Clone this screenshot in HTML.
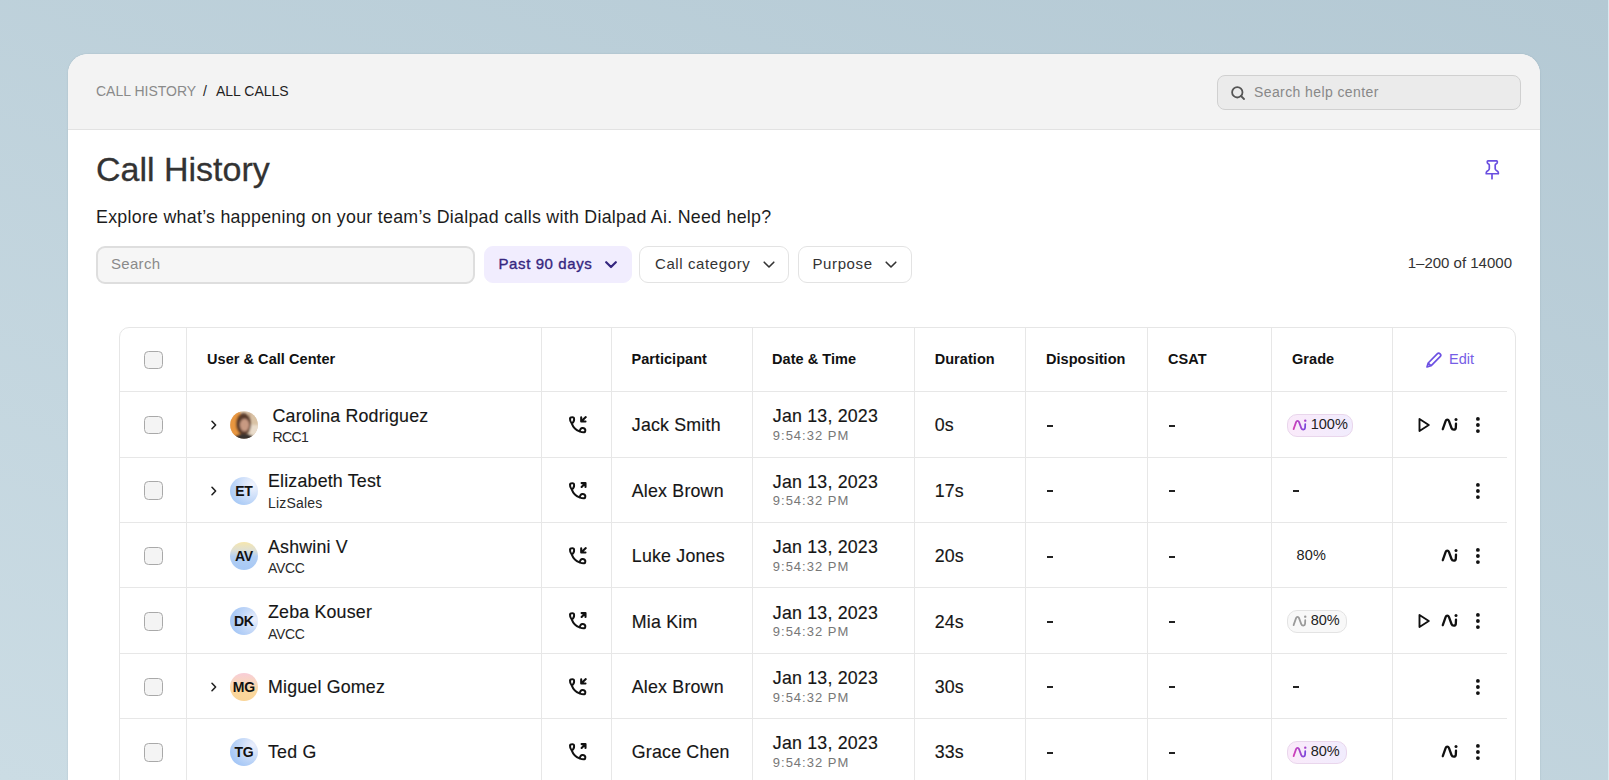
<!DOCTYPE html>
<html><head><meta charset="utf-8">
<style>
*{box-sizing:border-box;margin:0;padding:0}
html,body{width:1609px;height:780px;overflow:hidden}
body{font-family:"Liberation Sans",sans-serif;background:linear-gradient(200deg,#b4c9d4 0%,#cbdce4 100%);position:relative;color:#1c1c1c}
.abs{position:absolute}
#card{position:absolute;left:68px;top:54px;width:1472px;height:760px;background:#fff;border-radius:20px 20px 0 0;overflow:hidden;box-shadow:0 0 1.5px rgba(60,80,90,0.25)}
#topbar{position:absolute;left:0;top:0;width:100%;height:76px;background:#f3f3f3;border-bottom:1px solid #e2e2e2}
.crumb{position:absolute;top:29px;font-size:14px;letter-spacing:0px;white-space:nowrap}
#help{position:absolute;left:1149px;top:21px;width:304px;height:35px;background:#ebebeb;border:1.5px solid #d0d0d0;border-radius:8px}
#help span{position:absolute;left:36px;top:8px;font-size:14px;letter-spacing:0.4px;color:#888;white-space:nowrap}
h1{position:absolute;left:28px;top:96px;font-size:34px;font-weight:400;color:#333;white-space:nowrap;-webkit-text-stroke:0.3px #333}
.desc{position:absolute;left:28px;top:152.8px;font-size:17.8px;letter-spacing:0.28px;color:#1c1c1c;white-space:nowrap}
.inp{position:absolute;left:28px;top:192px;width:379px;height:38px;background:#f6f6f6;border:2px solid #dedede;border-radius:9px}
.inp span{position:absolute;left:13px;top:7px;font-size:15px;letter-spacing:0.3px;color:#8a8a8a}
.btn{position:absolute;top:192px;height:37px;border-radius:9px;border:1.5px solid #e3e3e3;background:#fff;font-size:15px;color:#333;white-space:nowrap}
.btn span{position:absolute;top:8px;letter-spacing:0.6px}
.btn svg{position:absolute;top:14px}
.count{position:absolute;right:28px;top:200px;font-size:15px;color:#333;white-space:nowrap}
#table{position:absolute;left:51px;top:273px;width:1397px;height:500px;border:1px solid #e6e6e6;border-radius:10px;overflow:hidden}
.vl{position:absolute;top:0;width:1px;height:500px;background:#e7e7e7}
.hl{position:absolute;left:0;width:1387px;height:1px;background:#e7e7e7}
.th{position:absolute;top:24px;font-size:14.5px;font-weight:700;color:#111;white-space:nowrap;letter-spacing:0.05px}
.cb{position:absolute;width:18.5px;height:18.5px;border:1.7px solid #a9a9a9;border-radius:4.5px;background:#f4f4f4}
.t17{position:absolute;font-size:17.8px;letter-spacing:0.2px;color:#161616;white-space:nowrap;-webkit-text-stroke:0.15px #161616}
.t14{position:absolute;font-size:14px;letter-spacing:0.2px;color:#2a2a2a;white-space:nowrap}
.tm{position:absolute;font-size:13px;letter-spacing:1px;color:#777;white-space:nowrap}
.av{position:absolute;left:109px;width:28px;height:28px;border-radius:50%;font-size:14px;font-weight:700;color:#111;text-align:center;line-height:28px;letter-spacing:-0.3px}
.chev{position:absolute;left:90px}
.pill{position:absolute;height:23px;border-radius:10px;border:1.5px solid #e3d3ee;background:#f8eafb}
.pill span{position:absolute;top:1px;font-size:14.5px;color:#222;white-space:nowrap}
</style></head><body>
<div style="position:absolute;left:1608px;top:0;width:1px;height:780px;background:#dbe9ef"></div>
<div id="card">
  <div id="topbar">
    <div class="crumb" style="left:28px;color:#8a8a8a">CALL HISTORY</div>
    <div class="crumb" style="left:135px;color:#222">/</div>
    <div class="crumb" style="left:148px;color:#1f1f1f">ALL CALLS</div>
    <div id="help">
      <svg style="position:absolute;left:13px;top:10px" width="15" height="14" viewBox="0 0 15 14"><circle cx="6.3" cy="6.3" r="5.2" fill="none" stroke="#555" stroke-width="1.8"/><path d="M10 10 L13 13" stroke="#555" stroke-width="1.8" stroke-linecap="round"/></svg>
      <span>Search help center</span>
    </div>
  </div>
  <h1>Call History</h1>
  <svg class="abs" style="left:1416px;top:104px" width="17" height="23" viewBox="0 0 17 23"><path d="M4 2.85 H12.6 Q13.3 2.85 13.3 3.6 V4.6 Q13.3 5.6 12.2 5.8 Q11.2 6 11.2 7 V10.8 Q11.2 11.8 12.4 12.4 Q14.35 13.3 14.35 14.8 V15.75 H2.25 V14.8 Q2.25 13.3 4.2 12.4 Q5.3 11.8 5.3 10.8 V7 Q5.3 6 4.3 5.8 Q3.3 5.6 3.3 4.6 V3.6 Q3.3 2.85 4 2.85 Z" fill="none" stroke="#6a4fe0" stroke-width="1.7" stroke-linejoin="round"/><path d="M8 15.75 V20.7" stroke="#6a4fe0" stroke-width="1.7" stroke-linecap="round"/></svg>
  <div class="desc">Explore what’s happening on your team’s Dialpad calls with Dialpad Ai. Need help?</div>
  <div class="inp"><span>Search</span></div>
  <div class="btn" style="left:416px;width:148px;background:#f1edfe;border-color:#f1edfe;color:#35277f;-webkit-text-stroke:0.35px #35277f"><span style="left:13.5px">Past 90 days</span>
    <svg style="left:120px" width="12" height="8" viewBox="0 0 12 8"><path d="M1.2 1.2 L6 6 L10.8 1.2" fill="none" stroke="#35277f" stroke-width="2.2" stroke-linecap="round" stroke-linejoin="round"/></svg></div>
  <div class="btn" style="left:571px;width:150px"><span style="left:15px">Call category</span>
    <svg style="left:123px" width="12" height="8" viewBox="0 0 12 8"><path d="M1.2 1.2 L6 6 L10.8 1.2" fill="none" stroke="#333" stroke-width="1.6" stroke-linecap="round" stroke-linejoin="round"/></svg></div>
  <div class="btn" style="left:730px;width:114px"><span style="left:13.5px">Purpose</span>
    <svg style="left:86px" width="12" height="8" viewBox="0 0 12 8"><path d="M1.2 1.2 L6 6 L10.8 1.2" fill="none" stroke="#333" stroke-width="1.6" stroke-linecap="round" stroke-linejoin="round"/></svg></div>
  <div class="count">1–200 of 14000</div>

  <div id="table">
<div class="vl" style="left:66px"></div>
<div class="vl" style="left:421px"></div>
<div class="vl" style="left:491px"></div>
<div class="vl" style="left:632px"></div>
<div class="vl" style="left:794px"></div>
<div class="vl" style="left:905px"></div>
<div class="vl" style="left:1027px"></div>
<div class="vl" style="left:1151px"></div>
<div class="vl" style="left:1272px"></div>
<div class="hl" style="top:63.0px"></div>
<div class="hl" style="top:128.5px"></div>
<div class="hl" style="top:194.0px"></div>
<div class="hl" style="top:259.3px"></div>
<div class="hl" style="top:324.6px"></div>
<div class="hl" style="top:390.2px"></div>
<div class="cb" style="left:24.2px;top:22.6px"></div>
<div class="th" style="left:87.0px;top:22.9px;">User &amp; Call Center</div>
<div class="th" style="left:511.5px;top:22.9px;">Participant</div>
<div class="th" style="left:652.0px;top:22.9px;">Date &amp; Time</div>
<div class="th" style="left:814.7px;top:22.9px;">Duration</div>
<div class="th" style="left:926.0px;top:22.9px;">Disposition</div>
<div class="th" style="left:1048.0px;top:22.9px;">CSAT</div>
<div class="th" style="left:1172.0px;top:22.9px;">Grade</div>
<svg class="abs" style="left:1305.0px;top:24.0px" width="17" height="17" viewBox="0 0 17 17"><path d="M12.2 1.8 C13 1 14.3 1 15.1 1.8 C15.9 2.6 15.9 3.9 15.1 4.7 L6 13.8 L2 15 L3.2 11 Z M3.2 11 L6 13.8" fill="none" stroke="#6d51e3" stroke-width="1.7" stroke-linejoin="round"/></svg>
<div class="th" style="left:1329.0px;top:22.9px;font-weight:400;color:#765de6">Edit</div>
<div class="cb" style="left:24.2px;top:87.9px"></div>
<svg class="abs" style="left:89.5px;top:92.0px" width="8" height="10" viewBox="0 0 8 10"><path d="M2 1.3 L5.6 5 L2 8.7" fill="none" stroke="#222" stroke-width="1.6" stroke-linecap="round" stroke-linejoin="round"/></svg>
<svg class="abs" style="left:109.6px;top:83.0px" width="28" height="28" viewBox="0 0 28 28"><defs><clipPath id="avc"><circle cx="14" cy="14" r="13.8"/></clipPath><filter id="avb" x="-20%" y="-20%" width="140%" height="140%"><feGaussianBlur stdDeviation="0.9"/></filter></defs><g clip-path="url(#avc)"><rect x="0" y="0" width="28" height="28" fill="#dcc6ad"/><g filter="url(#avb)"><rect x="-2" y="-2" width="12" height="30" fill="#e8963f"/><rect x="18" y="2" width="3" height="20" fill="#c8a98b"/><rect x="22" y="-2" width="8" height="16" fill="#d9c2a4"/><rect x="20" y="14" width="10" height="10" fill="#e9dccb"/><ellipse cx="13.5" cy="13" rx="7.5" ry="11" fill="#5a3b2a"/><ellipse cx="14.6" cy="14" rx="4.6" ry="6.3" fill="#c89a82"/><ellipse cx="14" cy="28" rx="11" ry="5" fill="#37312d"/></g></g></svg>
<div class="t17" style="left:152.5px;top:77.9px;">Carolina Rodriguez</div>
<div class="t14" style="left:152.5px;top:101.3px;letter-spacing:-0.6px">RCC1</div>
<svg class="abs" style="left:448.0px;top:87.0px" width="20" height="20" viewBox="0 0 20 20"><path d="M3.7 8.3 C5 11.8 8 15 11.5 16.4 C13.5 17.2 15.5 17.6 16.9 17.1 C17.4 16 17.2 14.2 16.5 13.6 C15.5 12.8 13.5 12.9 12.7 13.9 C12.2 14.6 12 15.5 11.5 16.4 M3.7 8.3 C2.4 6.8 1.9 4.8 2 3.5 C2.1 2.5 3 2.2 4.3 2.2 C5.6 2.2 6.2 2.8 6.1 4.2 C6.1 5.8 5.3 7.5 3.7 8.3" fill="none" stroke="#111" stroke-width="2" stroke-linecap="round" stroke-linejoin="round"/><path d="M13.2 2.4 V6.5 H17.5 M13.4 6.3 L17.8 2.1" fill="none" stroke="#111" stroke-width="2.1" stroke-linecap="round" stroke-linejoin="round"/></svg>
<div class="t17" style="left:511.8px;top:87.2px;">Jack Smith</div>
<div class="t17" style="left:652.8px;top:78.2px;">Jan 13, 2023</div>
<div class="tm" style="left:652.8px;top:99.9px;">9:54:32 PM</div>
<div class="t17" style="left:814.7px;top:87.2px;">0s</div>
<div class="abs" style="left:926.8px;top:96.8px;width:6px;height:2px;background:#222"></div>
<div class="abs" style="left:1048.8px;top:96.8px;width:6px;height:2px;background:#222"></div>
<div class="pill" style="left:1167.2px;top:85.6px;width:66px;background:linear-gradient(90deg,#faeafa,#f1ecfd);border-color:#e9d6ec"><svg class="abs" style="left:4px;top:3px" width="15" height="14" viewBox="0 0 17 15"><defs><linearGradient id="g0" x1="0" y1="0" x2="1" y2="0"><stop offset="0" stop-color="#d13fb8"/><stop offset="1" stop-color="#7a48dc"/></linearGradient></defs><path d="M1.8 12.2 L4.6 4.2 C5.3 2.2 7.3 2.2 8 4.2 L10.5 11 C11.3 13.2 14.6 13.2 14.8 10.8 L15 6.6" fill="none" stroke="url(#g0)" stroke-width="2.0" stroke-linecap="round" stroke-linejoin="round"/><circle cx="15" cy="2.6" r="1.35" fill="url(#g0)"/></svg><span style="left:22.5px">100%</span></div>
<svg class="abs" style="left:1297.0px;top:89.0px" width="14" height="16" viewBox="0 0 14 16"><path d="M2.5 2 L11.8 8 L2.5 14 Z" fill="none" stroke="#111" stroke-width="1.9" stroke-linejoin="round"/></svg>
<svg class="abs" style="left:1321.0px;top:88.8px" width="17" height="15" viewBox="0 0 17 15"><path d="M1.8 12.2 L4.6 4.2 C5.3 2.2 7.3 2.2 8 4.2 L10.5 11 C11.3 13.2 14.6 13.2 14.8 10.8 L15 6.6" fill="none" stroke="#111" stroke-width="2.3" stroke-linecap="round" stroke-linejoin="round"/><circle cx="15" cy="2.6" r="1.5" fill="#111"/></svg>
<svg class="abs" style="left:1354.0px;top:88.0px" width="8" height="18" viewBox="0 0 8 18"><circle cx="3.9" cy="2.9" r="1.9" fill="#111"/><circle cx="3.9" cy="9" r="1.9" fill="#111"/><circle cx="3.9" cy="15.1" r="1.9" fill="#111"/></svg>
<div class="cb" style="left:24.2px;top:153.4px"></div>
<svg class="abs" style="left:89.5px;top:157.5px" width="8" height="10" viewBox="0 0 8 10"><path d="M2 1.3 L5.6 5 L2 8.7" fill="none" stroke="#222" stroke-width="1.6" stroke-linecap="round" stroke-linejoin="round"/></svg>
<div class="av" style="left:109.8px;top:148.5px;background:radial-gradient(circle at 80% 28%,#f3f5fd 0%,#d3e2fa 35%,#acccf6 75%,#a6c8f6 100%)">ET</div>
<div class="t17" style="left:148.0px;top:143.4px;">Elizabeth Test</div>
<div class="t14" style="left:148.0px;top:166.8px;">LizSales</div>
<svg class="abs" style="left:448.0px;top:152.5px" width="20" height="20" viewBox="0 0 20 20"><path d="M3.7 8.3 C5 11.8 8 15 11.5 16.4 C13.5 17.2 15.5 17.6 16.9 17.1 C17.4 16 17.2 14.2 16.5 13.6 C15.5 12.8 13.5 12.9 12.7 13.9 C12.2 14.6 12 15.5 11.5 16.4 M3.7 8.3 C2.4 6.8 1.9 4.8 2 3.5 C2.1 2.5 3 2.2 4.3 2.2 C5.6 2.2 6.2 2.8 6.1 4.2 C6.1 5.8 5.3 7.5 3.7 8.3" fill="none" stroke="#111" stroke-width="2" stroke-linecap="round" stroke-linejoin="round"/><path d="M13.6 2.1 H17.5 V6 M17.3 2.3 L13.6 6" fill="none" stroke="#111" stroke-width="2.1" stroke-linecap="round" stroke-linejoin="round"/></svg>
<div class="t17" style="left:511.8px;top:152.7px;">Alex Brown</div>
<div class="t17" style="left:652.8px;top:143.7px;">Jan 13, 2023</div>
<div class="tm" style="left:652.8px;top:165.4px;">9:54:32 PM</div>
<div class="t17" style="left:814.7px;top:152.7px;">17s</div>
<div class="abs" style="left:926.8px;top:162.3px;width:6px;height:2px;background:#222"></div>
<div class="abs" style="left:1048.8px;top:162.3px;width:6px;height:2px;background:#222"></div>
<div class="abs" style="left:1172.5px;top:162.3px;width:6px;height:2px;background:#222"></div>
<svg class="abs" style="left:1354.0px;top:153.5px" width="8" height="18" viewBox="0 0 8 18"><circle cx="3.9" cy="2.9" r="1.9" fill="#111"/><circle cx="3.9" cy="9" r="1.9" fill="#111"/><circle cx="3.9" cy="15.1" r="1.9" fill="#111"/></svg>
<div class="cb" style="left:24.2px;top:218.9px"></div>
<div class="av" style="left:109.8px;top:214.0px;background:linear-gradient(180deg,#f6e6ad 0%,#e0e0d2 28%,#b3cff3 52%,#a6c8f5 100%)">AV</div>
<div class="t17" style="left:148.0px;top:208.9px;">Ashwini V</div>
<div class="t14" style="left:148.0px;top:232.3px;letter-spacing:-0.3px">AVCC</div>
<svg class="abs" style="left:448.0px;top:218.0px" width="20" height="20" viewBox="0 0 20 20"><path d="M3.7 8.3 C5 11.8 8 15 11.5 16.4 C13.5 17.2 15.5 17.6 16.9 17.1 C17.4 16 17.2 14.2 16.5 13.6 C15.5 12.8 13.5 12.9 12.7 13.9 C12.2 14.6 12 15.5 11.5 16.4 M3.7 8.3 C2.4 6.8 1.9 4.8 2 3.5 C2.1 2.5 3 2.2 4.3 2.2 C5.6 2.2 6.2 2.8 6.1 4.2 C6.1 5.8 5.3 7.5 3.7 8.3" fill="none" stroke="#111" stroke-width="2" stroke-linecap="round" stroke-linejoin="round"/><path d="M13.2 2.4 V6.5 H17.5 M13.4 6.3 L17.8 2.1" fill="none" stroke="#111" stroke-width="2.1" stroke-linecap="round" stroke-linejoin="round"/></svg>
<div class="t17" style="left:511.8px;top:218.2px;">Luke Jones</div>
<div class="t17" style="left:652.8px;top:209.2px;">Jan 13, 2023</div>
<div class="tm" style="left:652.8px;top:230.9px;">9:54:32 PM</div>
<div class="t17" style="left:814.7px;top:218.2px;">20s</div>
<div class="abs" style="left:926.8px;top:227.8px;width:6px;height:2px;background:#222"></div>
<div class="abs" style="left:1048.8px;top:227.8px;width:6px;height:2px;background:#222"></div>
<div class="t14" style="left:1176.6px;top:219.0px;font-size:14.5px;color:#222">80%</div>
<svg class="abs" style="left:1321.0px;top:219.8px" width="17" height="15" viewBox="0 0 17 15"><path d="M1.8 12.2 L4.6 4.2 C5.3 2.2 7.3 2.2 8 4.2 L10.5 11 C11.3 13.2 14.6 13.2 14.8 10.8 L15 6.6" fill="none" stroke="#111" stroke-width="2.3" stroke-linecap="round" stroke-linejoin="round"/><circle cx="15" cy="2.6" r="1.5" fill="#111"/></svg>
<svg class="abs" style="left:1354.0px;top:219.0px" width="8" height="18" viewBox="0 0 8 18"><circle cx="3.9" cy="2.9" r="1.9" fill="#111"/><circle cx="3.9" cy="9" r="1.9" fill="#111"/><circle cx="3.9" cy="15.1" r="1.9" fill="#111"/></svg>
<div class="cb" style="left:24.2px;top:284.2px"></div>
<div class="av" style="left:109.8px;top:279.3px;background:radial-gradient(circle at 85% 45%,#eef1fc 0%,#c9dbf8 35%,#a9c9f6 75%,#a4c6f5 100%)">DK</div>
<div class="t17" style="left:148.0px;top:274.2px;">Zeba Kouser</div>
<div class="t14" style="left:148.0px;top:297.6px;letter-spacing:-0.3px">AVCC</div>
<svg class="abs" style="left:448.0px;top:283.3px" width="20" height="20" viewBox="0 0 20 20"><path d="M3.7 8.3 C5 11.8 8 15 11.5 16.4 C13.5 17.2 15.5 17.6 16.9 17.1 C17.4 16 17.2 14.2 16.5 13.6 C15.5 12.8 13.5 12.9 12.7 13.9 C12.2 14.6 12 15.5 11.5 16.4 M3.7 8.3 C2.4 6.8 1.9 4.8 2 3.5 C2.1 2.5 3 2.2 4.3 2.2 C5.6 2.2 6.2 2.8 6.1 4.2 C6.1 5.8 5.3 7.5 3.7 8.3" fill="none" stroke="#111" stroke-width="2" stroke-linecap="round" stroke-linejoin="round"/><path d="M13.6 2.1 H17.5 V6 M17.3 2.3 L13.6 6" fill="none" stroke="#111" stroke-width="2.1" stroke-linecap="round" stroke-linejoin="round"/></svg>
<div class="t17" style="left:511.8px;top:283.5px;">Mia Kim</div>
<div class="t17" style="left:652.8px;top:274.5px;">Jan 13, 2023</div>
<div class="tm" style="left:652.8px;top:296.2px;">9:54:32 PM</div>
<div class="t17" style="left:814.7px;top:283.5px;">24s</div>
<div class="abs" style="left:926.8px;top:293.1px;width:6px;height:2px;background:#222"></div>
<div class="abs" style="left:1048.8px;top:293.1px;width:6px;height:2px;background:#222"></div>
<div class="pill" style="left:1167.2px;top:281.9px;width:60px;background:#f8f8f8;border-color:#e3e3e3"><svg class="abs" style="left:4px;top:3px" width="15" height="14" viewBox="0 0 17 15"><path d="M1.8 12.2 L4.6 4.2 C5.3 2.2 7.3 2.2 8 4.2 L10.5 11 C11.3 13.2 14.6 13.2 14.8 10.8 L15 6.6" fill="none" stroke="#9a9a9a" stroke-width="2.0" stroke-linecap="round" stroke-linejoin="round"/><circle cx="15" cy="2.6" r="1.35" fill="#9a9a9a"/></svg><span style="left:22.5px">80%</span></div>
<svg class="abs" style="left:1297.0px;top:285.3px" width="14" height="16" viewBox="0 0 14 16"><path d="M2.5 2 L11.8 8 L2.5 14 Z" fill="none" stroke="#111" stroke-width="1.9" stroke-linejoin="round"/></svg>
<svg class="abs" style="left:1321.0px;top:285.1px" width="17" height="15" viewBox="0 0 17 15"><path d="M1.8 12.2 L4.6 4.2 C5.3 2.2 7.3 2.2 8 4.2 L10.5 11 C11.3 13.2 14.6 13.2 14.8 10.8 L15 6.6" fill="none" stroke="#111" stroke-width="2.3" stroke-linecap="round" stroke-linejoin="round"/><circle cx="15" cy="2.6" r="1.5" fill="#111"/></svg>
<svg class="abs" style="left:1354.0px;top:284.3px" width="8" height="18" viewBox="0 0 8 18"><circle cx="3.9" cy="2.9" r="1.9" fill="#111"/><circle cx="3.9" cy="9" r="1.9" fill="#111"/><circle cx="3.9" cy="15.1" r="1.9" fill="#111"/></svg>
<div class="cb" style="left:24.2px;top:349.5px"></div>
<svg class="abs" style="left:89.5px;top:353.6px" width="8" height="10" viewBox="0 0 8 10"><path d="M2 1.3 L5.6 5 L2 8.7" fill="none" stroke="#222" stroke-width="1.6" stroke-linecap="round" stroke-linejoin="round"/></svg>
<div class="av" style="left:109.8px;top:344.6px;background:linear-gradient(180deg,#f8cdd8 0%,#f9d8bb 38%,#fbd79c 65%,#f9d497 100%)">MG</div>
<div class="t17" style="left:148.0px;top:348.5px;">Miguel Gomez</div>
<svg class="abs" style="left:448.0px;top:348.6px" width="20" height="20" viewBox="0 0 20 20"><path d="M3.7 8.3 C5 11.8 8 15 11.5 16.4 C13.5 17.2 15.5 17.6 16.9 17.1 C17.4 16 17.2 14.2 16.5 13.6 C15.5 12.8 13.5 12.9 12.7 13.9 C12.2 14.6 12 15.5 11.5 16.4 M3.7 8.3 C2.4 6.8 1.9 4.8 2 3.5 C2.1 2.5 3 2.2 4.3 2.2 C5.6 2.2 6.2 2.8 6.1 4.2 C6.1 5.8 5.3 7.5 3.7 8.3" fill="none" stroke="#111" stroke-width="2" stroke-linecap="round" stroke-linejoin="round"/><path d="M13.2 2.4 V6.5 H17.5 M13.4 6.3 L17.8 2.1" fill="none" stroke="#111" stroke-width="2.1" stroke-linecap="round" stroke-linejoin="round"/></svg>
<div class="t17" style="left:511.8px;top:348.8px;">Alex Brown</div>
<div class="t17" style="left:652.8px;top:339.8px;">Jan 13, 2023</div>
<div class="tm" style="left:652.8px;top:361.5px;">9:54:32 PM</div>
<div class="t17" style="left:814.7px;top:348.8px;">30s</div>
<div class="abs" style="left:926.8px;top:358.4px;width:6px;height:2px;background:#222"></div>
<div class="abs" style="left:1048.8px;top:358.4px;width:6px;height:2px;background:#222"></div>
<div class="abs" style="left:1172.5px;top:358.4px;width:6px;height:2px;background:#222"></div>
<svg class="abs" style="left:1354.0px;top:349.6px" width="8" height="18" viewBox="0 0 8 18"><circle cx="3.9" cy="2.9" r="1.9" fill="#111"/><circle cx="3.9" cy="9" r="1.9" fill="#111"/><circle cx="3.9" cy="15.1" r="1.9" fill="#111"/></svg>
<div class="cb" style="left:24.2px;top:415.1px"></div>
<div class="av" style="left:109.8px;top:410.2px;background:radial-gradient(circle at 80% 28%,#eceffc 0%,#c8dbf8 38%,#a7c8f6 75%,#a2c4f5 100%)">TG</div>
<div class="t17" style="left:148.0px;top:414.1px;">Ted G</div>
<svg class="abs" style="left:448.0px;top:414.2px" width="20" height="20" viewBox="0 0 20 20"><path d="M3.7 8.3 C5 11.8 8 15 11.5 16.4 C13.5 17.2 15.5 17.6 16.9 17.1 C17.4 16 17.2 14.2 16.5 13.6 C15.5 12.8 13.5 12.9 12.7 13.9 C12.2 14.6 12 15.5 11.5 16.4 M3.7 8.3 C2.4 6.8 1.9 4.8 2 3.5 C2.1 2.5 3 2.2 4.3 2.2 C5.6 2.2 6.2 2.8 6.1 4.2 C6.1 5.8 5.3 7.5 3.7 8.3" fill="none" stroke="#111" stroke-width="2" stroke-linecap="round" stroke-linejoin="round"/><path d="M13.6 2.1 H17.5 V6 M17.3 2.3 L13.6 6" fill="none" stroke="#111" stroke-width="2.1" stroke-linecap="round" stroke-linejoin="round"/></svg>
<div class="t17" style="left:511.8px;top:414.4px;">Grace Chen</div>
<div class="t17" style="left:652.8px;top:405.4px;">Jan 13, 2023</div>
<div class="tm" style="left:652.8px;top:427.1px;">9:54:32 PM</div>
<div class="t17" style="left:814.7px;top:414.4px;">33s</div>
<div class="abs" style="left:926.8px;top:424.0px;width:6px;height:2px;background:#222"></div>
<div class="abs" style="left:1048.8px;top:424.0px;width:6px;height:2px;background:#222"></div>
<div class="pill" style="left:1167.2px;top:412.8px;width:60px;background:linear-gradient(90deg,#faeafa,#f1ecfd);border-color:#e9d6ec"><svg class="abs" style="left:4px;top:3px" width="15" height="14" viewBox="0 0 17 15"><defs><linearGradient id="g5" x1="0" y1="0" x2="1" y2="0"><stop offset="0" stop-color="#d13fb8"/><stop offset="1" stop-color="#7a48dc"/></linearGradient></defs><path d="M1.8 12.2 L4.6 4.2 C5.3 2.2 7.3 2.2 8 4.2 L10.5 11 C11.3 13.2 14.6 13.2 14.8 10.8 L15 6.6" fill="none" stroke="url(#g5)" stroke-width="2.0" stroke-linecap="round" stroke-linejoin="round"/><circle cx="15" cy="2.6" r="1.35" fill="url(#g5)"/></svg><span style="left:22.5px">80%</span></div>
<svg class="abs" style="left:1321.0px;top:416.0px" width="17" height="15" viewBox="0 0 17 15"><path d="M1.8 12.2 L4.6 4.2 C5.3 2.2 7.3 2.2 8 4.2 L10.5 11 C11.3 13.2 14.6 13.2 14.8 10.8 L15 6.6" fill="none" stroke="#111" stroke-width="2.3" stroke-linecap="round" stroke-linejoin="round"/><circle cx="15" cy="2.6" r="1.5" fill="#111"/></svg>
<svg class="abs" style="left:1354.0px;top:415.2px" width="8" height="18" viewBox="0 0 8 18"><circle cx="3.9" cy="2.9" r="1.9" fill="#111"/><circle cx="3.9" cy="9" r="1.9" fill="#111"/><circle cx="3.9" cy="15.1" r="1.9" fill="#111"/></svg>
  </div>
</div>
</body></html>
